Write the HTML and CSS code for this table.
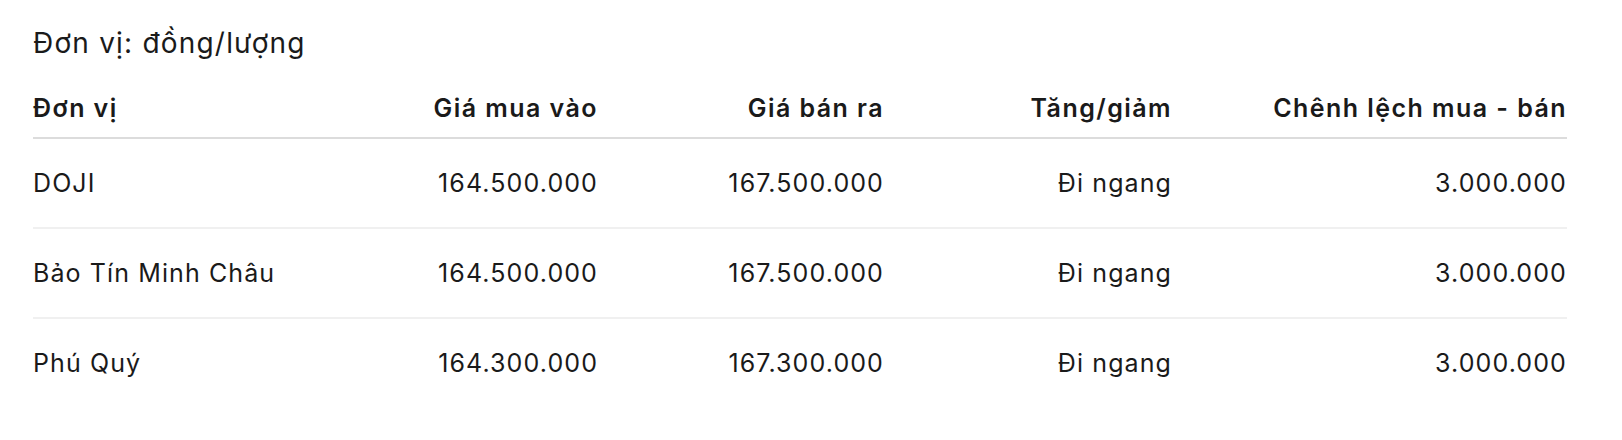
FILE: index.html
```html
<!DOCTYPE html>
<html lang="vi">
<head>
<meta charset="utf-8">
<title>Giá vàng</title>
<link rel="stylesheet" href="styles.css">
</head>
<body>
<div class="page">
  <p class="unit">Đơn vị: đồng/lượng</p>
  <table class="prices">
    <colgroup>
      <col class="c1"><col class="c2"><col class="c3"><col class="c4"><col class="c5">
    </colgroup>
    <thead>
      <tr>
        <th class="left">Đơn vị</th>
        <th>Giá mua vào</th>
        <th>Giá bán ra</th>
        <th>Tăng/giảm</th>
        <th>Chênh lệch mua - bán</th>
      </tr>
    </thead>
    <tbody>
      <tr>
        <td class="left">DOJI</td>
        <td>164.500.000</td>
        <td>167.500.000</td>
        <td>Đi ngang</td>
        <td>3.000.000</td>
      </tr>
      <tr>
        <td class="left">Bảo Tín Minh Châu</td>
        <td>164.500.000</td>
        <td>167.500.000</td>
        <td>Đi ngang</td>
        <td>3.000.000</td>
      </tr>
      <tr>
        <td class="left">Phú Quý</td>
        <td>164.300.000</td>
        <td>167.300.000</td>
        <td>Đi ngang</td>
        <td>3.000.000</td>
      </tr>
    </tbody>
  </table>
</div>
</body>
</html>
```

FILE: styles.css
```css
html, body {
  margin: 0;
  padding: 0;
  background: #ffffff;
}

body {
  font-family: Inter, "Noto Sans", "Liberation Sans", sans-serif;
  color: #1a1a1a;
}

.page {
  padding: 23px 56px 0 33px;
}

.unit {
  margin: 0 0 15px 0;
  font-size: 28px;
  line-height: 40px;
  font-weight: 400;
  letter-spacing: 1.2px;
}

.prices {
  width: 1534px;
  border-collapse: collapse;
  table-layout: fixed;
}

.c1 { width: 280px; }
.c2 { width: 285px; }
.c3 { width: 286px; }
.c4 { width: 288px; }
.c5 { width: 395px; }

.prices th,
.prices td {
  padding: 0;
  text-align: right;
  vertical-align: middle;
  white-space: nowrap;
}

.prices th {
  height: 59px;
  font-size: 25px;
  font-weight: 600;
  letter-spacing: 1.45px;
  border-bottom: 2px solid #dcdcdc;
}

.prices td {
  height: 88px;
  font-size: 25px;
  font-weight: 400;
  letter-spacing: 1.1px;
  border-bottom: 2px solid #f0f0f0;
}

.prices tbody tr:last-child td {
  border-bottom: none;
}

.prices .left {
  text-align: left;
}
```
